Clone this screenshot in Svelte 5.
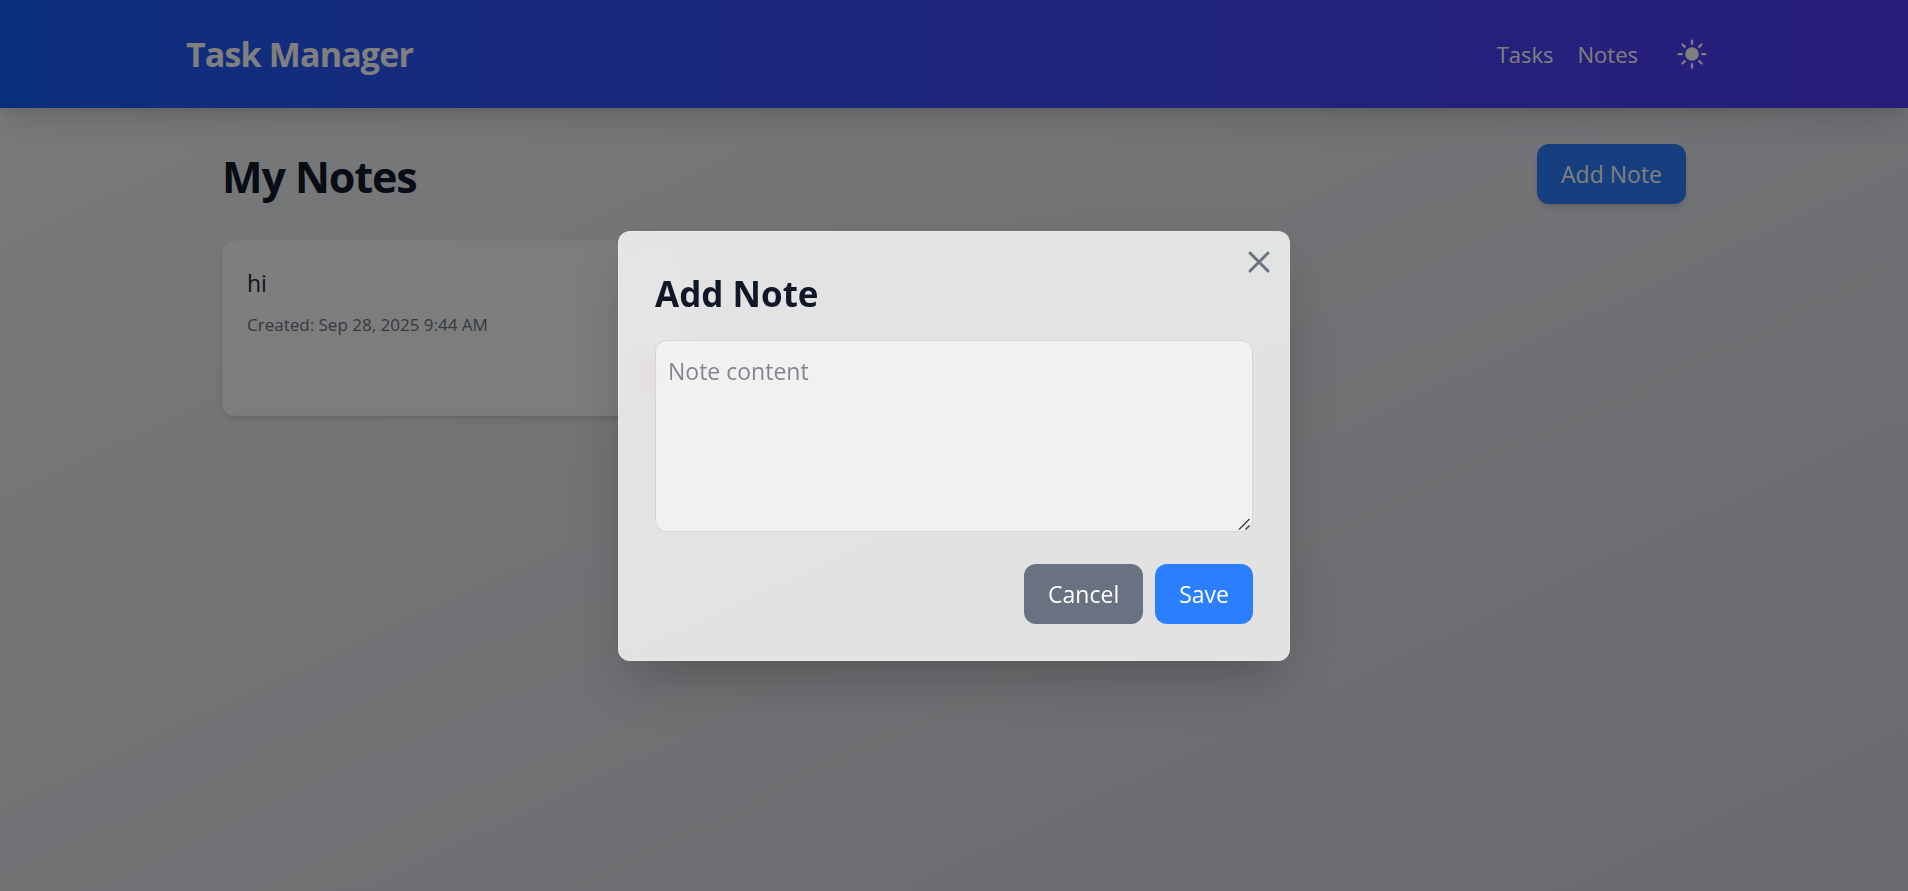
<script lang="ts">
  interface Note {
    id: number;
    content: string;
    created: string;
  }

  let notes: Note[] = $state([{ id: 1, content: 'hi', created: 'Sep 28, 2025 9:44 AM' }]);
  let open = $state(true);
  let draft = $state('');

  function close() {
    open = false;
    draft = '';
  }

  function save(event: SubmitEvent) {
    event.preventDefault();
    if (!draft.trim()) return;
    const created = new Date().toLocaleString('en-US', { dateStyle: 'medium', timeStyle: 'short' });
    notes.push({ id: notes.length + 1, content: draft.trim(), created });
    close();
  }
</script>

<div class="page">
  <header>
    <div class="container bar">
      <a class="brand" href="#home">Task Manager</a>
      <nav>
        <a href="#tasks">Tasks</a>
        <a href="#notes">Notes</a>
        <button class="theme" aria-label="Toggle theme">
          <svg viewBox="0 0 24 24" fill="currentColor" aria-hidden="true">
            <path d="M12 2.25a.75.75 0 0 1 .75.75v2.25a.75.75 0 0 1-1.5 0V3a.75.75 0 0 1 .75-.75ZM7.5 12a4.5 4.5 0 1 1 9 0 4.5 4.5 0 0 1-9 0ZM18.894 6.166a.75.75 0 0 0-1.06-1.06l-1.591 1.59a.75.75 0 1 0 1.06 1.061l1.591-1.59ZM21.75 12a.75.75 0 0 1-.75.75h-2.25a.75.75 0 0 1 0-1.5H21a.75.75 0 0 1 .75.75ZM17.834 18.894a.75.75 0 0 0 1.06-1.06l-1.59-1.591a.75.75 0 1 0-1.061 1.06l1.59 1.591ZM12 18a.75.75 0 0 1 .75.75V21a.75.75 0 0 1-1.5 0v-2.25A.75.75 0 0 1 12 18ZM7.758 17.303a.75.75 0 0 0-1.061-1.06l-1.591 1.59a.75.75 0 0 0 1.06 1.061l1.591-1.59ZM6 12a.75.75 0 0 1-.75.75H3a.75.75 0 0 1 0-1.5h2.25A.75.75 0 0 1 6 12ZM6.697 7.757a.75.75 0 0 0 1.06-1.06l-1.59-1.591a.75.75 0 0 0-1.061 1.06l1.59 1.591Z" />
          </svg>
        </button>
      </nav>
    </div>
  </header>

  <main class="container">
    <div class="heading">
      <h1>My Notes</h1>
      <button class="btn primary raised" onclick={() => (open = true)}>Add Note</button>
    </div>
    <ul class="notes">
      {#each notes as note (note.id)}
        <li class="card">
          <p class="content">{note.content}</p>
          <p class="meta">Created: {note.created}</p>
          <button
            class="delete"
            aria-label="Delete note"
            onclick={() => (notes = notes.filter((n) => n.id !== note.id))}
          >
            <svg viewBox="0 0 24 24" fill="currentColor" stroke="currentColor" stroke-width="2" stroke-linecap="round" stroke-linejoin="round" aria-hidden="true">
              <path d="M4 7h16M9 7V4a1 1 0 0 1 1-1h4a1 1 0 0 1 1 1v3M5 7l.867 12.142A2 2 0 0 0 7.862 21h8.276a2 2 0 0 0 1.995-1.858L19 7z" />
            </svg>
          </button>
        </li>
      {/each}
    </ul>
  </main>
</div>

{#if open}
  <div class="overlay">
    <div class="modal" role="dialog" aria-modal="true" aria-labelledby="dialog-title">
      <button class="close" aria-label="Close" onclick={close}>
        <svg viewBox="0 0 24 24" fill="none" stroke="currentColor" stroke-width="2" stroke-linecap="round" stroke-linejoin="round" aria-hidden="true">
          <path d="M6 18L18 6M6 6l12 12" />
        </svg>
      </button>
      <h2 id="dialog-title">Add Note</h2>
      <form onsubmit={save}>
        <textarea aria-label="Note content" placeholder="Note content" bind:value={draft}></textarea>
        <div class="actions">
          <button type="button" class="btn secondary" onclick={close}>Cancel</button>
          <button type="submit" class="btn primary">Save</button>
        </div>
      </form>
    </div>
  </div>
{/if}

<style>
  :global(body) {
    margin: 0;
    font-family: 'Segoe UI', 'Open Sans', 'Noto Sans', sans-serif;
    font-size: 23px;
    line-height: 36px;
    color: #101828;
  }

  :global(*) {
    box-sizing: border-box;
  }

  h1,
  h2,
  p,
  ul {
    margin: 0;
    padding: 0;
  }

  a {
    color: inherit;
    text-decoration: none;
  }

  button,
  textarea {
    font: inherit;
    color: inherit;
  }

  button {
    padding: 0;
    border: 0;
    background: none;
    cursor: pointer;
  }

  svg {
    display: block;
    width: 36px;
    height: 36px;
  }

  .page {
    min-height: 100vh;
    background: linear-gradient(to bottom right, #f3f4f6, #d1d5dc);
  }

  .container {
    width: 100%;
    max-width: 1536px;
    margin: 0 auto;
  }

  header {
    position: relative;
    padding: 24px 0;
    color: #fff;
    background: linear-gradient(to right in oklab, #155dfc, #4f39f6);
    box-shadow:
      0 20px 25px -5px rgb(0 0 0 / 0.1),
      0 8px 10px -6px rgb(0 0 0 / 0.1);
  }

  .bar,
  nav,
  .heading {
    display: flex;
    align-items: center;
  }

  .bar,
  .heading {
    justify-content: space-between;
  }

  .heading {
    align-items: flex-end;
    margin-bottom: 36px;
  }

  nav {
    gap: 24px;
    font-size: 22px;
  }

  .brand {
    font-size: 34px;
    line-height: 48px;
    font-weight: 700;
    letter-spacing: -0.025em;
  }

  .theme {
    padding: 12px;
    border-radius: 50%;
  }

  main {
    padding: 36px;
  }

  h1 {
    font-size: 43px;
    line-height: 54px;
    font-weight: 700;
    letter-spacing: -0.025em;
  }

  .btn {
    padding: 12px 24px;
    border-radius: 12px;
    color: #fff;
  }

  .primary {
    background: #2b7fff;
  }

  .secondary {
    background: #6a7282;
  }

  .raised {
    box-shadow:
      0 4px 6px -1px rgb(0 0 0 / 0.1),
      0 2px 4px -2px rgb(0 0 0 / 0.1);
  }

  .notes {
    display: grid;
    grid-template-columns: repeat(3, 1fr);
    gap: 24px;
    list-style: none;
  }

  .card {
    display: flex;
    flex-direction: column;
    padding: 24px;
    border: 1px solid rgb(229 231 235 / 0.5);
    border-radius: 12px;
    background: rgb(255 255 255 / 0.8);
    box-shadow:
      0 4px 6px -1px rgb(0 0 0 / 0.1),
      0 2px 4px -2px rgb(0 0 0 / 0.1);
  }

  .content {
    color: #1e2939;
  }

  .meta {
    margin-top: 12px;
    font-size: 17px;
    line-height: 24px;
    color: #6a7282;
  }

  .delete {
    align-self: flex-end;
    margin-top: 24px;
    color: #fb2c36;
  }

  .delete svg {
    width: 30px;
    height: 30px;
  }

  .overlay {
    position: fixed;
    inset: 0;
    display: flex;
    align-items: center;
    justify-content: center;
    background: rgb(0 0 0 / 0.5);
  }

  .modal {
    position: relative;
    width: 100%;
    max-width: 672px;
    padding: 36px;
    border: 1px solid rgb(255 255 255 / 0.2);
    border-radius: 12px;
    background: rgb(255 255 255 / 0.8);
    backdrop-filter: blur(12px);
    box-shadow: 0 25px 50px -12px rgb(0 0 0 / 0.25);
  }

  .close {
    position: absolute;
    top: 12px;
    right: 12px;
    color: #6a7282;
  }

  h2 {
    margin-bottom: 20px;
    font-size: 35px;
    line-height: 52px;
    font-weight: 700;
  }

  textarea {
    display: block;
    width: 100%;
    height: 192px;
    margin-bottom: 32px;
    padding: 12px;
    border: 1px solid #d1d5dc;
    border-radius: 12px;
    background: rgb(255 255 255 / 0.5);
    resize: vertical;
  }

  textarea::placeholder {
    color: rgb(16 24 40 / 0.5);
  }

  textarea::-webkit-resizer {
    background: url("data:image/svg+xml,%3Csvg xmlns='http://www.w3.org/2000/svg' width='15' height='15' fill='none' stroke='%23444' stroke-width='1.5'%3E%3Cpath d='M2 13.500L12.500 3M8.500 13.500L12.500 9.500'/%3E%3C/svg%3E") no-repeat;
  }

  .actions {
    display: flex;
    justify-content: flex-end;
    gap: 12px;
  }
</style>
